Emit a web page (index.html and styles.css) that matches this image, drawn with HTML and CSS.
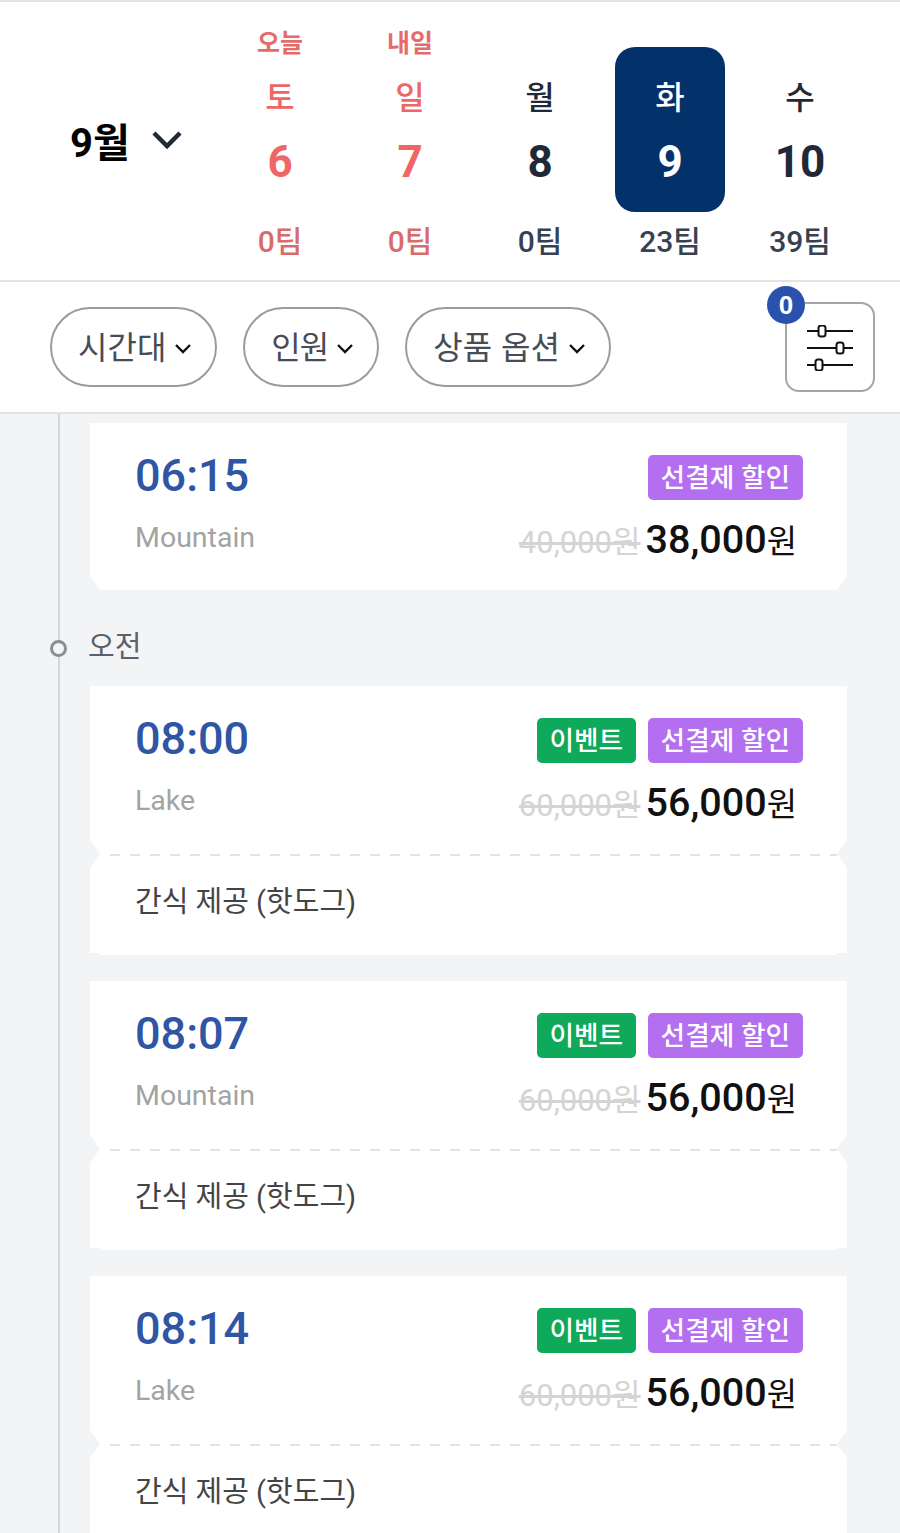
FILE: index.html
```html
<!DOCTYPE html>
<html lang="ko">

<head>
  <meta charset="UTF-8">
  <meta name="viewport" content="width=device-width, initial-scale=1.0">
  <title>Tee Time</title>
  <link rel="stylesheet" href="styles.css">
</head>

<body>
  <div class="page">
    <!-- Date picker -->
    <header class="date-bar">
      <div class="month">
        <span class="month-label">9월</span>
        <svg class="month-arrow" width="32" height="20" viewBox="0 0 32 20"><path d="M3 3l13 13L29 3" fill="none" stroke="#1f2937" stroke-width="4.500"/></svg>
      </div>
      <div class="date-col holiday">
        <div class="date-cell">
          <span class="date-tag">오늘</span>
          <span class="date-day">토</span>
          <span class="date-num">6</span>
        </div>
        <span class="date-count">0팀</span>
      </div>
      <div class="date-col holiday">
        <div class="date-cell">
          <span class="date-tag">내일</span>
          <span class="date-day">일</span>
          <span class="date-num">7</span>
        </div>
        <span class="date-count">0팀</span>
      </div>
      <div class="date-col">
        <div class="date-cell">
          <span class="date-day">월</span>
          <span class="date-num">8</span>
        </div>
        <span class="date-count">0팀</span>
      </div>
      <div class="date-col selected">
        <div class="date-cell">
          <span class="date-day">화</span>
          <span class="date-num">9</span>
        </div>
        <span class="date-count">23팀</span>
      </div>
      <div class="date-col">
        <div class="date-cell">
          <span class="date-day">수</span>
          <span class="date-num">10</span>
        </div>
        <span class="date-count">39팀</span>
      </div>
    </header>

    <!-- Filters -->
    <div class="filter-bar">
      <button class="pill">시간대<svg class="pill-arrow" width="18" height="12" viewBox="0 0 18 12"><path d="M2 2l7 7 7-7" fill="none" stroke="#111" stroke-width="2.4"/></svg></button>
      <button class="pill pill-people">인원<svg class="pill-arrow" width="18" height="12" viewBox="0 0 18 12"><path d="M2 2l7 7 7-7" fill="none" stroke="#111" stroke-width="2.4"/></svg></button>
      <button class="pill">상품 옵션<svg class="pill-arrow" width="18" height="12" viewBox="0 0 18 12"><path d="M2 2l7 7 7-7" fill="none" stroke="#111" stroke-width="2.4"/></svg></button>
      <button class="filter-button">
        <span class="filter-count">0</span>
        <svg class="filter-icon" width="46" height="46" viewBox="0 0 46 46" fill="none" stroke="#111" stroke-width="2">
          <path d="M0 6h11.500M18.500 6H46M0 23h29.500M36.500 23H46M0 40h8.500M15.500 40H46"/>
          <rect x="11.500" y="0.500" width="7" height="11" rx="2.500"/>
          <rect x="29.500" y="17.500" width="7" height="11" rx="2.500"/>
          <rect x="8.500" y="34.500" width="7" height="11" rx="2.500"/>
        </svg>
      </button>
    </div>

    <!-- Tee time list -->
    <main class="list">
      <div class="card first">
        <div class="card-main">
          <div class="card-left">
            <div class="time">06:15</div>
            <div class="course">Mountain</div>
          </div>
          <div class="card-right">
            <div class="badges">
              <span class="badge purple">선결제 할인</span>
            </div>
            <div class="price">
              <span class="old-price">40,000원</span>
              <span class="new-price">38,000<small>원</small></span>
            </div>
          </div>
        </div>
      </div>

      <div class="period">오전</div>

      <div class="card">
        <div class="card-main">
          <div class="card-left">
            <div class="time">08:00</div>
            <div class="course">Lake</div>
          </div>
          <div class="card-right">
            <div class="badges">
              <span class="badge green">이벤트</span>
              <span class="badge purple">선결제 할인</span>
            </div>
            <div class="price">
              <span class="old-price">60,000원</span>
              <span class="new-price">56,000<small>원</small></span>
            </div>
          </div>
        </div>
        <div class="card-extra">간식 제공 (핫도그)</div>
      </div>

      <div class="card">
        <div class="card-main">
          <div class="card-left">
            <div class="time">08:07</div>
            <div class="course">Mountain</div>
          </div>
          <div class="card-right">
            <div class="badges">
              <span class="badge green">이벤트</span>
              <span class="badge purple">선결제 할인</span>
            </div>
            <div class="price">
              <span class="old-price">60,000원</span>
              <span class="new-price">56,000<small>원</small></span>
            </div>
          </div>
        </div>
        <div class="card-extra">간식 제공 (핫도그)</div>
      </div>

      <div class="card">
        <div class="card-main">
          <div class="card-left">
            <div class="time">08:14</div>
            <div class="course">Lake</div>
          </div>
          <div class="card-right">
            <div class="badges">
              <span class="badge green">이벤트</span>
              <span class="badge purple">선결제 할인</span>
            </div>
            <div class="price">
              <span class="old-price">60,000원</span>
              <span class="new-price">56,000<small>원</small></span>
            </div>
          </div>
        </div>
        <div class="card-extra">간식 제공 (핫도그)</div>
      </div>
    </main>
  </div>
</body>

</html>
```

FILE: styles.css
```css
*,
*::before {
  box-sizing: border-box;
}

body {
  margin: 0;
  font-family: Roboto, "Noto Sans CJK KR", sans-serif;
  background-color: #f3f4f6;
}

.page {
  height: 100vh;
  overflow: hidden;
  display: flex;
  flex-direction: column;
}

/* Date picker */
.date-bar {
  flex: none;
  display: flex;
  height: 282px;
  padding-top: 45px;
  background-color: #fff;
  border-top: 2px solid #e3e3e3;
  border-bottom: 2px solid #e3e3e3;
}

.month {
  width: 215px;
  height: 165px;
  padding: 20px 0 0 70px;
  display: flex;
  align-items: center;
}

.month-label {
  font-size: 40px;
  font-weight: 700;
  color: #000;
}

.month-arrow {
  margin-left: 21px;
  margin-top: 1px;
}

.date-col {
  width: 130px;
  display: flex;
  flex-direction: column;
  align-items: center;
  color: #1f2937;
}

.date-cell {
  position: relative;
  width: 110px;
  height: 165px;
  padding-top: 27px;
  border-radius: 20px;
  display: flex;
  flex-direction: column;
  align-items: center;
}

.date-tag {
  position: absolute;
  top: -19px;
  left: 0;
  right: 0;
  text-align: center;
  font-size: 25px;
  line-height: 32px;
  font-weight: 700;
  color: #e56b6b;
}

.date-day {
  font-size: 32px;
  line-height: 48px;
  font-weight: 500;
}

.date-num {
  font-size: 44px;
  line-height: 80px;
  font-weight: 700;
}

.date-count {
  margin-top: 7px;
  font-size: 30px;
  line-height: 46px;
  font-weight: 500;
  color: #374151;
}

.holiday .date-day,
.holiday .date-num {
  color: #ef6666;
}

.holiday .date-count {
  color: #d96b6b;
}

.selected .date-cell {
  background-color: #03326b;
  color: #fff;
}

/* Filters */
.filter-bar {
  flex: none;
  display: flex;
  align-items: center;
  height: 132px;
  padding: 0 25px 0 50px;
  gap: 26px;
  background-color: #fff;
  border-bottom: 2px solid #e3e3e3;
}

.pill {
  display: flex;
  align-items: center;
  height: 80px;
  padding: 0 23px 5px 26px;
  border: 2.500px solid #9b9b9b;
  border-radius: 40px;
  background-color: #fff;
  font-family: inherit;
  font-size: 32px;
  word-spacing: 1px;
  color: #484c54;
}

.pill-people {
  letter-spacing: -1px;
}

.pill-arrow {
  margin-left: 8px;
  margin-top: 9px;
}

.filter-button {
  position: relative;
  margin-left: auto;
  width: 90px;
  height: 90px;
  padding: 0;
  display: flex;
  align-items: center;
  justify-content: center;
  border: 2.500px solid #a6a6a6;
  border-radius: 14px;
  background-color: #fff;
}

.filter-icon {
  margin-top: 2px;
}

.filter-count {
  position: absolute;
  top: -18px;
  left: -20px;
  width: 38px;
  height: 38px;
  border-radius: 50%;
  background-color: #2a52ad;
  color: #fff;
  font-family: inherit;
  font-size: 26px;
  font-weight: 700;
  line-height: 38px;
  text-align: center;
}

/* Tee time list */
.list {
  flex: 1;
  margin-left: 58px;
  padding: 9px 53px 0 30px;
  border-left: 2px solid #d0d7e2;
}

.card {
  margin-bottom: 26px;
}

.card.first {
  margin-bottom: 0;
}

.card-main {
  height: 168px;
  padding: 0 44px 0 45px;
  display: flex;
  justify-content: space-between;
  background-color: #fff;
  clip-path: polygon(0 0, 100% 0, 100% calc(100% - 14px), calc(100% - 10px) 100%, 10px 100%, 0 calc(100% - 14px));
}

.first .card-main {
  height: 167px;
}

.card-left {
  padding-top: 23px;
}

.time {
  font-size: 45px;
  line-height: 60px;
  font-weight: 500;
  color: #2f55a4;
}

.course {
  margin-top: 12px;
  font-size: 28.500px;
  line-height: 40px;
  color: #a3a3a3;
}

.card-right {
  padding-top: 32px;
  display: flex;
  flex-direction: column;
  align-items: flex-end;
}

.badges {
  display: flex;
  gap: 12px;
}

.badge {
  height: 45px;
  padding: 0 13px;
  border-radius: 5px;
  font-size: 26.700px;
  line-height: 47px;
  font-weight: 500;
  color: #fff;
}

.badge.green {
  padding: 0 12.500px;
  background-color: #0ea95a;
}

.badge.purple {
  background-color: #b36ff0;
}

.price {
  display: flex;
  align-items: baseline;
  gap: 5px;
  margin-top: 15px;
  padding-right: 6px;
  line-height: 50px;
}

.old-price {
  font-size: 31px;
  color: #d4d4d4;
  text-decoration: line-through;
}

.new-price {
  font-size: 39.500px;
  font-weight: 500;
  color: #111;
}

.new-price small {
  font-size: 33px;
  font-weight: 400;
}

.card-extra {
  position: relative;
  height: 101px;
  padding: 26px 45px 0;
  font-size: 29px;
  line-height: 44px;
  color: #444;
  background-color: #fff;
  clip-path: polygon(10px 0, calc(100% - 10px) 0, 100% 14px, 100% calc(100% - 2px), calc(100% - 10px) calc(100% - 2px), calc(100% - 10px) 100%, 10px 100%, 10px calc(100% - 2px), 0 calc(100% - 2px), 0 14px);
}

/* dashed tear line between the two parts of a card */
.card-extra::before {
  content: "";
  position: absolute;
  top: 0;
  left: 20px;
  right: 10px;
  height: 2px;
  background-image: repeating-linear-gradient(to right, #e3e3e3 0, #e3e3e3 10px, transparent 10px, transparent 20px);
}

.period {
  position: relative;
  margin: 37px 0 19px -2px;
  font-size: 29px;
  line-height: 40px;
  color: #5b606b;
}

/* dot sitting on the timeline */
.period::before {
  content: "";
  position: absolute;
  top: 13px;
  left: -38px;
  width: 17px;
  height: 17px;
  border: 3px solid #888d96;
  border-radius: 50%;
  background-color: #f3f4f6;
}
```
